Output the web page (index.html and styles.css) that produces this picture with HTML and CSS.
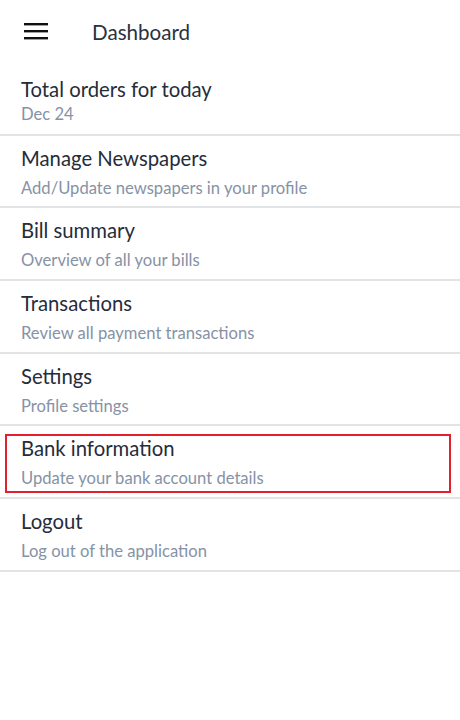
FILE: index.html
```html
<!DOCTYPE html>
<html lang="en">
<head>
<meta charset="utf-8">
<title>Dashboard</title>
<link rel="stylesheet" href="styles.css">
</head>
<body>
<header class="topbar">
  <button class="menu-btn" aria-label="Menu">
    <svg width="24" height="17" viewBox="0 0 24 17" aria-hidden="true">
      <rect x="0" y="0" width="24" height="2.4" fill="#111"/>
      <rect x="0" y="7" width="24" height="2.4" fill="#111"/>
      <rect x="0" y="14" width="24" height="2.4" fill="#111"/>
    </svg>
  </button>
  <h1 class="topbar-title">Dashboard</h1>
</header>
<ul class="menu-list">
  <li class="menu-item menu-item--first">
    <div class="item-title">Total orders for today</div>
    <div class="item-sub">Dec 24</div>
  </li>
  <li class="menu-item">
    <div class="item-title">Manage Newspapers</div>
    <div class="item-sub">Add/Update newspapers in your profile</div>
  </li>
  <li class="menu-item">
    <div class="item-title">Bill summary</div>
    <div class="item-sub">Overview of all your bills</div>
  </li>
  <li class="menu-item">
    <div class="item-title">Transactions</div>
    <div class="item-sub">Review all payment transactions</div>
  </li>
  <li class="menu-item">
    <div class="item-title">Settings</div>
    <div class="item-sub">Profile settings</div>
  </li>
  <li class="menu-item menu-item--highlight">
    <div class="item-title">Bank information</div>
    <div class="item-sub">Update your bank account details</div>
  </li>
  <li class="menu-item">
    <div class="item-title">Logout</div>
    <div class="item-sub">Log out of the application</div>
  </li>
</ul>
</body>
</html>
```
FILE: styles.css
```css
* { box-sizing: border-box; }
html, body {
  margin: 0;
  padding: 0;
  background: #ffffff;
}
body {
  font-family: Lato, "Open Sans", sans-serif;
  color: #252c3a;
  width: 460px;
}
.topbar {
  height: 64px;
  display: flex;
  align-items: center;
  padding-left: 24px;
}
.menu-btn {
  border: 0;
  background: none;
  padding: 0;
  margin: 0;
  width: 24px;
  height: 17px;
  display: block;
  margin-top: -1px;
}
.menu-btn svg { display: block; }
.topbar-title {
  margin: 0 0 0 44px;
  font-size: 20.6px;
  font-weight: 400;
  line-height: 28px;
  color: #2a3140;
}
.menu-list {
  list-style: none;
  margin: 0;
  padding: 0;
}
.menu-item {
  padding: 7.8px 21px 6.7px;
  border-bottom: 2px solid #e2e3e5;
}
.menu-item--first {
  padding-top: 11.3px;
  padding-bottom: 7.5px;
}
.menu-item--first .item-sub { margin-top: -1px; }
.item-title {
  font-size: 20.3px;
  line-height: 28px;
  color: #252c3a;
}
.item-sub {
  margin-top: 4.2px;
  font-size: 16.6px;
  line-height: 24px;
  color: #8692a5;
}
.menu-item--highlight {
  position: relative;
}
.menu-item--highlight::after {
  content: "";
  position: absolute;
  left: 5px;
  right: 9px;
  top: 7.5px;
  bottom: 4.5px;
  border: 2px solid #e0202c;
  pointer-events: none;
}
```
